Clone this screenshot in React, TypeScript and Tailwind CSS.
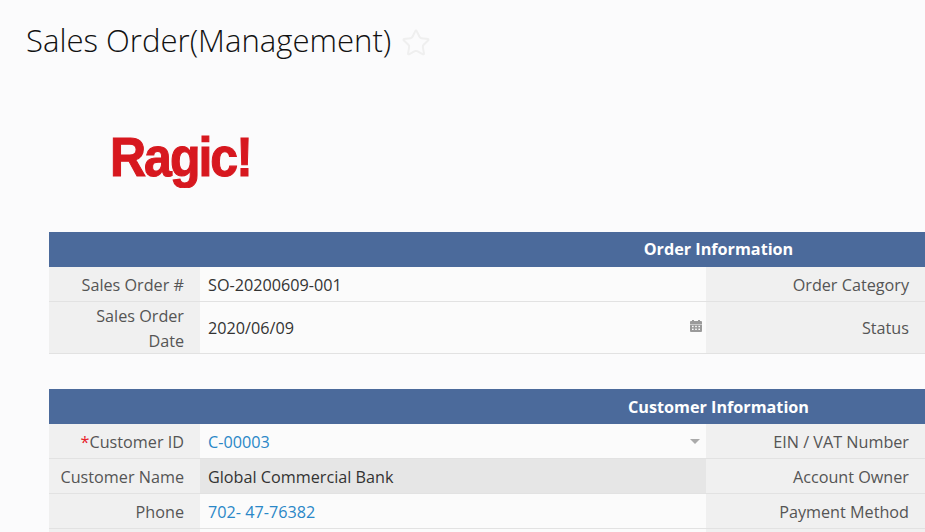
import { Star } from 'lucide-react';

type Row = {
  label: string;
  required?: boolean;
  value: string;
  link?: boolean;
  readOnly?: boolean;
  icon?: 'calendar' | 'caret';
  label2: string;
  tall?: boolean;
};

const orderRows: Row[] = [
  { label: 'Sales Order #', value: 'SO-20200609-001', label2: 'Order Category' },
  { label: 'Sales Order Date', value: '2020/06/09', icon: 'calendar', label2: 'Status', tall: true },
];

const customerRows: Row[] = [
  { label: 'Customer ID', required: true, value: 'C-00003', link: true, icon: 'caret', label2: 'EIN / VAT Number' },
  { label: 'Customer Name', value: 'Global Commercial Bank', readOnly: true, label2: 'Account Owner' },
  { label: 'Phone', value: '702- 47-76382', link: true, label2: 'Payment Method' },
  { label: '', value: '', label2: '' },
];

function CalendarIcon() {
  return (
    <svg width="12" height="13" viewBox="0 0 12 13" className="text-[#9a9a9a] -mt-[6px] -mr-[1px]" fill="currentColor">
      <path d="M0 3a1 1 0 0 1 1-1h1V1h2v1h4V1h2v1h1a1 1 0 0 1 1 1v2H0z" />
      <path d="M0 5.6h12V12a1 1 0 0 1-1 1H1a1 1 0 0 1-1-1z" />
      <g fill="#fbfbfb">
        <rect x="2" y="6.8" width="1.6" height="1.4" />
        <rect x="5.2" y="6.8" width="1.6" height="1.4" />
        <rect x="8.4" y="6.8" width="1.6" height="1.4" />
        <rect x="2" y="9.6" width="1.6" height="1.4" />
        <rect x="5.2" y="9.6" width="1.6" height="1.4" />
        <rect x="8.4" y="9.6" width="1.6" height="1.4" />
      </g>
    </svg>
  );
}

function Section({ title, rows, lowTitle }: { title: string; rows: Row[]; lowTitle?: boolean }) {
  return (
    <section className="w-[1339px]">
      <div
        className={`h-[35px] bg-[#4b6a9b] flex items-center justify-center text-white font-bold text-[16.2px] ${lowTitle ? 'pt-[2px]' : ''}`}
      >
        {title}
      </div>
      <div className="grid grid-cols-[151px_506px_219px_463px] text-[16.2px] leading-[25px]">
        {rows.map((row, i) => (
          <div key={i} className="contents">
            <div
              className={`${row.tall ? 'h-[52px]' : 'h-[35px]'} bg-[#f0f0f0] border-b border-[#e2e2e2] text-[#555] text-right pl-2 pr-4 pt-[2px] flex items-center justify-end`}
            >
              <span>
                {row.required && <span className="text-[#e8212b]">*</span>}
                {row.label}
              </span>
            </div>
            <div
              className={`${row.readOnly ? 'bg-[#e6e6e6]' : 'bg-[#fbfbfb]'} border-b border-[#e2e2e2] pl-2 pr-[5px] pt-[2px] flex items-center justify-between ${row.link ? 'text-[#2a87c7]' : 'text-[#333]'}`}
            >
              <span>{row.value}</span>
              {row.icon === 'calendar' && <CalendarIcon />}
              {row.icon === 'caret' && (
                <span className="w-0 h-0 mr-[1px] -mt-[2px] border-x-[5px] border-x-transparent border-t-[5px] border-t-[#aaa]" />
              )}
            </div>
            <div className="bg-[#f0f0f0] border-b border-[#e2e2e2] text-[#555] pr-4 pt-[2px] flex items-center justify-end">
              {row.label2}
            </div>
            <div className="bg-[#fbfbfb] border-b border-[#e2e2e2]" />
          </div>
        ))}
      </div>
    </section>
  );
}

export default function App() {
  return (
    <div className="h-[532px] w-[925px] overflow-hidden bg-[#fbfbfc] font-['Open_Sans',sans-serif]">
      {/* Title */}
      <div className="h-[82px] pl-[26px] pt-[19px] flex items-start gap-[10px]">
        <h1 className="text-[31.1px] leading-[42px] font-light text-[#111] whitespace-nowrap">
          Sales Order(Management)
        </h1>
        <Star className="size-[30px] mt-[9px] text-[#efefef]" strokeWidth={1.6} />
      </div>

      {/* Logo */}
      <div className="h-[150px] pl-[110px] pt-[45px]">
        <span className="inline-block scale-y-[1.1] blur-[0.5px] font-['Liberation_Sans',sans-serif] font-bold text-[50px] leading-[60px] tracking-[-2px] text-[#d7181f] [-webkit-text-stroke:1px_#d7181f]">
          Ragic!
        </span>
      </div>

      {/* Form */}
      <div className="pl-[49px] flex flex-col gap-[35px]">
        <Section title="Order Information" rows={orderRows} />
        <Section title="Customer Information" rows={customerRows} lowTitle />
      </div>
    </div>
  );
}
